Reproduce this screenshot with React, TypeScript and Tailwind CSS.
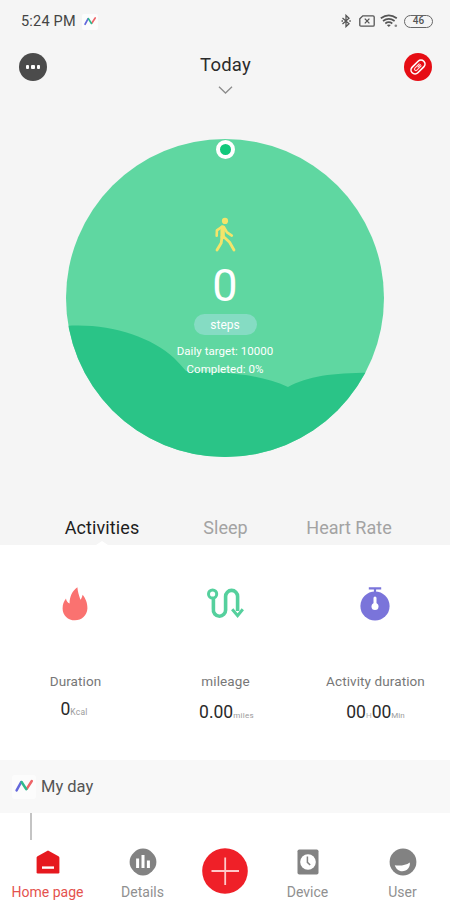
import { ReactNode } from 'react'

interface Metric {
  label: string
  icon: ReactNode
  value: ReactNode
  valueClass: string
}

interface NavItem {
  label: string
  icon: ReactNode
  labelClass: string
}

function BrandMark({ className }: { className: string }) {
  return (
    <svg viewBox="0 0 24 24" className={className} fill="none" strokeLinecap="round" strokeWidth="2.5">
      <rect width="24" height="24" rx="3" fill="#fcfcfc" />
      <path d="M4.6 15.4L9.2 7" stroke="#6468dc" />
      <path d="M14.9 13.6L19.8 6" stroke="#ee6468" />
      <path d="M9.6 7L14.2 14.2" stroke="#2fb98c" />
    </svg>
  )
}

function StatusBar() {
  return (
    <div className="flex h-[42px] items-center justify-between pl-[21px] pr-[17px]">
      <div className="flex items-center pt-px">
        <span className="w-[56px] whitespace-nowrap text-[14.5px] leading-5 tracking-[0.2px] text-[#444]">5:24 PM</span>
        <BrandMark className="ml-[5px] size-4" />
      </div>
      <div className="flex items-center text-[#555]">
        <svg width="10" height="14" viewBox="0 0 10 14" fill="none" stroke="currentColor" strokeWidth="1.3">
          <path d="M1.5 4L8 9.8L5 12.6V1.4L8 4.2L1.5 10" />
          <path d="M0.5 7H2M8.3 7H9.8" />
        </svg>
        <svg className="ml-[8px]" width="16" height="12" viewBox="0 0 16 12" fill="none" stroke="currentColor" strokeWidth="1.3">
          <path d="M3.8 0.8H14Q15.2 0.8 15.2 2V10Q15.2 11.2 14 11.2H2Q0.8 11.2 0.8 10V3.8Z" />
          <path d="M5.8 3.6L10.4 8.4M10.4 3.6L5.8 8.4" />
        </svg>
        <svg className="ml-[5px]" width="18" height="14" viewBox="0 0 18 14" fill="none" stroke="currentColor" strokeWidth="1.7">
          <path d="M0.8 4.3Q8.8 -1.7 16.8 4.3" />
          <path d="M3 7Q8.8 2.8 14.6 7" />
          <path d="M5.3 9.5Q8.8 6.9 12.3 9.5" />
          <path d="M6.8 11L8.8 13L10.8 11Q8.8 9.8 6.8 11Z" fill="currentColor" stroke="none" />
          <circle cx="15.8" cy="11.8" r="1.3" fill="#888" stroke="none" />
        </svg>
        <div className="ml-[6px] flex h-[13px] w-[29px] items-center justify-center rounded-full border-[1.5px] border-[#666] text-[10px] font-medium leading-none">
          46
        </div>
      </div>
    </div>
  )
}

function Header() {
  return (
    <div className="flex h-[60px] items-start justify-between pl-[19px] pr-[18px]">
      <div className="mt-[11px] flex size-7 items-center justify-center gap-[2px] rounded-full bg-[#4b4b4b]">
        <span className="size-[3.5px] rounded-[1px] bg-white" />
        <span className="size-[3.5px] rounded-[1px] bg-white" />
        <span className="size-[3.5px] rounded-[1px] bg-white" />
      </div>
      <div className="flex flex-col items-center pt-[11px]">
        <h1 className="text-[18.5px] leading-6 tracking-[0.2px] text-[#2b2b2b]">Today</h1>
        <svg className="mt-[9px]" width="15" height="8" viewBox="0 0 15 8" fill="none" stroke="#8c8c8c" strokeWidth="1.3">
          <path d="M1 0.8L7.5 7L14 0.8" />
        </svg>
      </div>
      <div className="mt-[11px] flex size-7 items-center justify-center rounded-full bg-[#e60d14]">
        <svg width="20" height="20" viewBox="0 0 20 20" fill="none" stroke="#fff" strokeLinecap="round">
          <g transform="rotate(-45 10 10)">
            <rect x="1.8" y="6" width="16.4" height="8" rx="4" strokeWidth="1.6" />
            <path d="M13 8.6H7A1.4 1.4 0 0 0 7 11.4H13M10 10H13.4" strokeWidth="1.1" stroke="#ffd4d4" />
          </g>
        </svg>
      </div>
    </div>
  )
}

function StepsDial() {
  return (
    <div className="relative mx-auto mt-[37px] flex size-[318px] flex-col items-center overflow-hidden rounded-full bg-[#5fd7a1] text-white">
      <svg className="absolute inset-0" width="318" height="318" viewBox="0 0 318 318">
        <path
          d="M0 187C42 184 84 197 108 219Q114 225 120 232C154 233 192 234 222 248C244 236 274 233 318 234V318H0Z"
          fill="#2ac487"
        />
      </svg>
      <div className="relative mt-[1px] size-[19px] rounded-full border-[4.5px] border-white bg-[#12c97c]" />
      <svg className="relative mt-[58px]" width="22" height="35" viewBox="0 0 22 35" fill="none" stroke="#f4e46a" strokeLinecap="round" strokeLinejoin="round">
        <circle cx="11" cy="3.9" r="3.1" fill="#f4e46a" stroke="none" />
        <path d="M8.6 10.4V20" strokeWidth="4.4" />
        <path d="M8 9.8L2.9 13.4L2.7 18.8" strokeWidth="2.6" />
        <path d="M9.8 10L13 15.4L17.8 18.6" strokeWidth="2.6" />
        <path d="M8 20L7.2 26L3 33" strokeWidth="2.8" />
        <path d="M9.4 19.5L15.6 25.2L20 33" strokeWidth="2.8" />
      </svg>
      <div className="relative mt-[9px] text-[45px] leading-[50px]">0</div>
      <div className="relative mt-[3px] flex h-[21px] w-[63px] items-center justify-center rounded-full bg-[#85dcc3] text-[12px]">
        steps
      </div>
      <div className="relative mt-[7px] text-[11.5px] leading-[18px] tracking-[0.05px]">Daily target: 10000</div>
      <div className="relative text-[11.5px] leading-[18px] tracking-[0.05px]">Completed: 0%</div>
    </div>
  )
}

function Tabs() {
  return (
    <div className="mt-[52px] flex h-9 text-[18px] leading-[37px] text-[#a3a3a3]">
      <div className="relative ml-[40px] w-[124px] text-center tracking-[0.1px] text-[#1d1d1d]">
        Activities
        <span className="absolute bottom-0 left-1/2 border-x-[6px] border-b-4 border-x-transparent border-b-white -translate-x-1/2" />
      </div>
      <div className="w-[123px] text-center">Sleep</div>
      <div className="w-[124px] text-center">Heart Rate</div>
    </div>
  )
}

const metrics: Metric[] = [
  {
    label: 'Duration',
    icon: (
      <svg width="26" height="34" viewBox="0 0 26 34">
        <path
          d="M15.4 0.3C15.7 5 17 8.3 18.4 12.8C19.6 11.5 20.1 9.8 20.6 7.8C23.4 11.2 25.6 16 25.4 21.5C25.1 28.6 19.6 33.3 13 33.3C6 33.3 0.6 28.2 0.6 21.4C0.6 17.6 1.8 14.5 4 11.6C4.3 14.1 5.5 15.6 7.6 16.6C7.6 9.8 10 4.2 15.4 0.3Z"
          fill="#fa7270"
        />
      </svg>
    ),
    value: (
      <>
        0<span className="text-[8.5px] tracking-[0.2px] text-[#9b9b9b]">Kcal</span>
      </>
    ),
    valueClass: 'mt-[6px] -ml-[2px]',
  },
  {
    label: 'mileage',
    icon: (
      <svg width="38" height="34" viewBox="0 0 38 34" fill="none" stroke="#55d09d" strokeWidth="3.6">
        <circle cx="6.6" cy="7" r="4.1" strokeWidth="3" />
        <path d="M7.4 11.5V22A6.2 6.2 0 0 0 13.5 29.2A6.2 6.2 0 0 0 19.6 23V9.5A6 6 0 0 1 25.6 3.4A6 6 0 0 1 31.6 9.5V24" />
        <path d="M26.2 22.2L31.6 28.6L36.8 22.2" strokeWidth="3" />
      </svg>
    ),
    value: (
      <>
        0.00<span className="text-[8px] tracking-[0.3px] text-[#9b9b9b]">miles</span>
      </>
    ),
    valueClass: 'mt-[9px] ml-[3px]',
  },
  {
    label: 'Activity duration',
    icon: (
      <svg width="30" height="34" viewBox="0 0 30 34">
        <path d="M8.8 1.4H21.2M15 1V6" stroke="#7a74da" strokeWidth="2.2" />
        <circle cx="15" cy="19" r="14.6" fill="#7a74da" />
        <path d="M15 11V18" stroke="#fff" strokeWidth="3" strokeLinecap="round" />
        <circle cx="15" cy="19.4" r="3.5" fill="#fff" />
      </svg>
    ),
    value: (
      <>
        00<span className="text-[8px] text-[#b5b5b5]">H</span>00
        <span className="text-[8px] text-[#9b9b9b]">Min</span>
      </>
    ),
    valueClass: 'mt-[9px] ml-[1px]',
  },
]

function Metrics() {
  return (
    <div className="grid h-[215px] grid-cols-3 bg-white">
      {metrics.map(metric => (
        <div key={metric.label} className="flex flex-col items-center pt-[42px]">
          {metric.icon}
          <div className="mt-[50px] ml-px whitespace-nowrap text-[13.5px] leading-5 tracking-[0.1px] text-[#777]">{metric.label}</div>
          <div className={`whitespace-nowrap text-[17.5px] leading-6 text-[#2a2a2a] ${metric.valueClass}`}>{metric.value}</div>
        </div>
      ))}
    </div>
  )
}

const leftNav: NavItem[] = [
  {
    label: 'Home page',
    icon: (
      <svg width="24" height="24" viewBox="0 0 24 24">
        <path d="M12 0.5L22.5 6.2Q23.4 6.8 23.4 7.8V22.2Q23.4 23.5 22.2 23.5H1.8Q0.6 23.5 0.6 22.2V7.8Q0.6 6.8 1.5 6.2Z" fill="#e6191f" />
        <path d="M6 17.6H18" stroke="#fff" strokeWidth="2.4" />
      </svg>
    ),
    labelClass: 'text-[#e4524e]',
  },
  {
    label: 'Details',
    icon: (
      <svg width="28" height="28" viewBox="0 0 28 28">
        <path d="M14 0.6C18 0.6 20.3 2 23.2 4.8C26 7.7 27.4 10 27.4 14S26 20.3 23.2 23.2C20.3 26 18 27.4 14 27.4S7.7 26 4.8 23.2C2 20.3 0.6 18 0.6 14S2 7.7 4.8 4.8C7.7 2 10 0.6 14 0.6Z" fill="#828282" />
        <path d="M8.6 10.6V20M14 7V20M19.4 12.6V20" stroke="#fff" strokeWidth="3" />
      </svg>
    ),
    labelClass: 'text-[#909090]',
  },
]

const rightNav: NavItem[] = [
  {
    label: 'Device',
    icon: (
      <svg width="22" height="26" viewBox="0 0 22 26" fill="none">
        <rect x="0.5" y="0.5" width="21" height="25" rx="1.8" fill="#828282" />
        <circle cx="11" cy="13" r="7.8" fill="#fff" />
        <path d="M10.4 7.6V13.4L13.2 16" stroke="#828282" strokeWidth="1.5" />
      </svg>
    ),
    labelClass: 'text-[#909090]',
  },
  {
    label: 'User',
    icon: (
      <svg width="28" height="28" viewBox="0 0 28 28">
        <circle cx="14" cy="14" r="13.4" fill="#828282" />
        <path d="M5.8 17.2Q14.5 18.6 20.8 14.4C21.5 18.8 18.2 23.2 13.2 23.2C9.6 23.2 6.8 20.6 5.8 17.2Z" fill="#fff" />
      </svg>
    ),
    labelClass: 'text-[#909090]',
  },
]

function NavButton({ item }: { item: NavItem }) {
  return (
    <div className="flex w-[95px] flex-col items-center">
      <div className="flex h-7 shrink-0 items-center">{item.icon}</div>
      <span className={`mt-[6px] whitespace-nowrap text-[14px] leading-5 ${item.labelClass}`}>{item.label}</span>
    </div>
  )
}

function BottomNav() {
  return (
    <nav className="flex h-[60px] pt-[8px]">
      {leftNav.map(item => (
        <NavButton key={item.label} item={item} />
      ))}
      <div className="flex w-[70px] justify-center">
        <svg width="46" height="46" viewBox="0 0 46 46">
          <circle cx="23" cy="23" r="22.8" fill="#ef2028" />
          <path d="M9.5 23H37M23.2 9.5V37" stroke="#ffc9c9" strokeWidth="1.8" />
        </svg>
      </div>
      {rightNav.map(item => (
        <NavButton key={item.label} item={item} />
      ))}
    </nav>
  )
}

export default function App() {
  return (
    <div className="flex h-[900px] w-[450px] flex-col overflow-hidden bg-[#f5f5f5] font-[Roboto,'Liberation_Sans',sans-serif]">
      <StatusBar />
      <Header />
      <StepsDial />
      <Tabs />
      <Metrics />
      <div className="flex h-[53px] items-center bg-[#f8f8f8] pl-3">
        <BrandMark className="size-6" />
        <span className="ml-[5px] pt-px text-[16.5px] leading-6 text-[#555]">My day</span>
      </div>
      <div className="flex flex-1 flex-col bg-white">
        <div className="ml-[30px] h-[27px] w-[1.5px] bg-[#c4c4c4]" />
        <BottomNav />
      </div>
    </div>
  )
}
